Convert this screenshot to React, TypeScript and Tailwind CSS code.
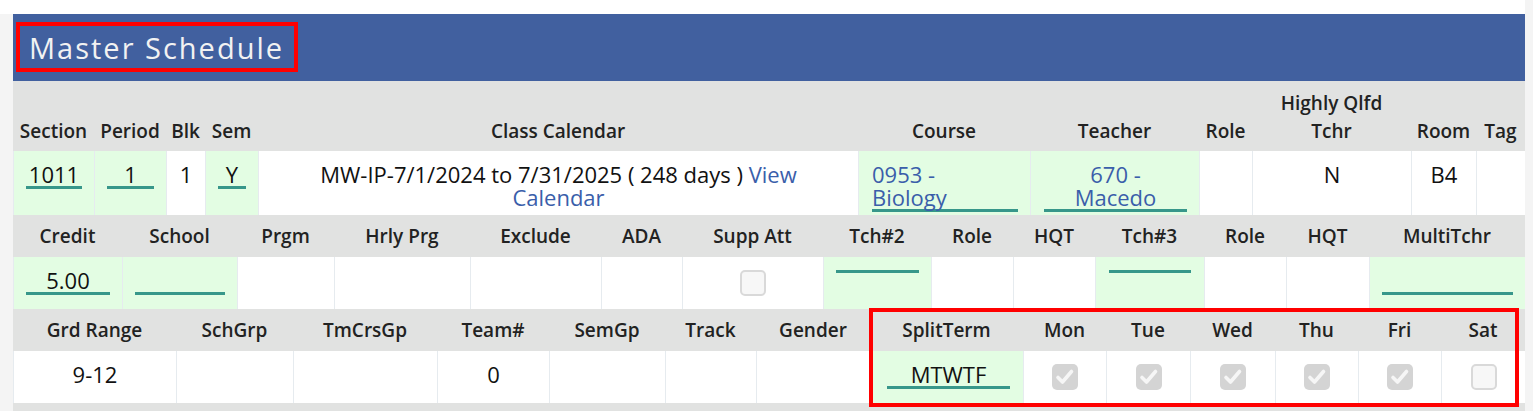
import React from "react";

const SEP = "border-l border-[#e6ebef] first:border-l-0";

function Field({ value, className = "" }: { value?: string; className?: string }) {
  return (
    <div className={"border-b-[3px] border-[#37978a] text-center leading-[23px] h-[26px] " + className}>
      {value}
    </div>
  );
}

function Box({ checked }: { checked?: boolean }) {
  if (checked) {
    return (
      <div className="w-[26px] h-[26px] rounded-[5px] bg-[#d4d4d4] flex items-center justify-center">
        <svg width="26" height="26" viewBox="0 0 26 26">
          <polyline points="6,13.5 10.5,18 19.5,7.5" fill="none" stroke="#f6f6f6" strokeWidth="3.6" strokeLinecap="round" strokeLinejoin="round" />
        </svg>
      </div>
    );
  }
  return <div className="w-[26px] h-[26px] rounded-[5px] bg-[#f7f7f7] border-2 border-[#d9d9d9]" />;
}

export default function App() {
  const head2 = ["Credit", "School", "Prgm", "Hrly Prg", "Exclude", "ADA", "Supp Att", "Tch#2", "Role", "HQT", "Tch#3", "Role", "HQT", "MultiTchr"];
  const head3 = ["Grd Range", "SchGrp", "TmCrsGp", "Team#", "SemGp", "Track", "Gender", "SplitTerm", "Mon", "Tue", "Wed", "Thu", "Fri", "Sat"];

  return (
    <div className="w-[1533px] h-[411px] overflow-hidden bg-white flex font-['Open_Sans',sans-serif]">
      <div className="w-[13px] mt-[14px] bg-[#f4f4f4]" />

      <div className="w-[1512px] pt-[14px] flex flex-col">
        {/* title bar */}
        <div className="relative h-[67px] bg-[#41609f] flex items-center px-[16px]">
          <h1 className="text-[29px] leading-none tracking-[2px] text-[#f2f2f2] font-normal">Master Schedule</h1>
          <div className="absolute left-[3px] top-[8px] w-[282px] h-[50px] border-4 border-[#ff0000]" />
        </div>

        {/* block 1 */}
        <div className="grid grid-cols-[81px_72px_39px_53px_600px_172px_169px_53px_159px_65px_49px] text-[#111]">
          {["Section", "Period", "Blk", "Sem", "Class Calendar", "Course", "Teacher", "Role", "Highly Qlfd\nTchr", "Room", "Tag"].map((h, i) => (
            <div key={i} className="h-[70px] bg-[#e1e2e1] flex items-end justify-center pb-[6px] text-[19px] leading-[28px] font-semibold text-[#222] text-center whitespace-pre-line">
              {h}
            </div>
          ))}

          <div className={SEP + " h-[64px] bg-[#e3fde3] px-[12px] pt-[12px] text-[22px]"}>
            <Field value="1011" />
          </div>
          <div className={SEP + " bg-[#e3fde3] px-[12px] pt-[12px] text-[22px]"}>
            <Field value="1" />
          </div>
          <div className={SEP + " bg-white pt-[12px] text-[22px] leading-[23px] text-center"}>1</div>
          <div className={SEP + " bg-[#e3fde3] px-[12px] pt-[12px] text-[22px]"}>
            <Field value="Y" />
          </div>
          <div className={SEP + " bg-white pt-[12px] text-[22px] leading-[23px] text-center"}>
            MW-IP-7/1/2024 to 7/31/2025 ( 248 days ) <span className="text-[#3a5eaa]">View</span>
            <br />
            <span className="text-[#3a5eaa]">Calendar</span>
          </div>
          <div className={SEP + " bg-[#e3fde3] pl-[13px] pr-[12px] pt-[12px] text-[22px]"}>
            <div className="border-b-[3px] border-[#37978a] leading-[23px] text-[#3a5eaa]">
              0953 -<br />Biology
            </div>
          </div>
          <div className={SEP + " bg-[#e3fde3] pl-[13px] pr-[12px] pt-[12px] text-[22px]"}>
            <div className="border-b-[3px] border-[#37978a] leading-[23px] text-[#3a5eaa] text-center">
              670 -<br />Macedo
            </div>
          </div>
          <div className={SEP + " bg-white"} />
          <div className={SEP + " bg-white pt-[12px] text-[22px] leading-[23px] text-center"}>N</div>
          <div className={SEP + " bg-white pt-[12px] text-[22px] leading-[23px] text-center"}>B4</div>
          <div className={SEP + " bg-white"} />
        </div>

        {/* block 2 */}
        <div className="grid grid-cols-[109px_115px_97px_136px_131px_81px_141px_108px_82px_82px_109px_82px_83px_156px] text-[#111]">
          {head2.map((h, i) => (
            <div key={i} className="h-[42px] bg-[#e1e2e1] flex items-center justify-center text-[19px] font-semibold text-[#222]">
              {h}
            </div>
          ))}
          <div className={SEP + " h-[52px] bg-[#e3fde3] px-[12px] pt-[12px] text-[22px]"}>
            <Field value="5.00" />
          </div>
          <div className={SEP + " bg-[#e3fde3] px-[12px] pt-[12px] text-[22px]"}>
            <Field />
          </div>
          <div className={SEP + " bg-white"} />
          <div className={SEP + " bg-white"} />
          <div className={SEP + " bg-white"} />
          <div className={SEP + " bg-white"} />
          <div className={SEP + " bg-white flex items-center justify-center"}>
            <Box />
          </div>
          <div className={SEP + " bg-[#e3fde3] px-[12px] pt-[13px]"}>
            <div className="h-[3px] bg-[#37978a]" />
          </div>
          <div className={SEP + " bg-white"} />
          <div className={SEP + " bg-white"} />
          <div className={SEP + " bg-[#e3fde3] px-[13px] pt-[13px]"}>
            <div className="h-[3px] bg-[#37978a]" />
          </div>
          <div className={SEP + " bg-white"} />
          <div className={SEP + " bg-white"} />
          <div className={SEP + " bg-[#e3fde3] px-[12px] pt-[12px] text-[22px]"}>
            <Field />
          </div>
        </div>

        {/* block 3 */}
        <div className="relative grid grid-cols-[163px_117px_144px_112px_116px_91px_114px_153px_83px_84px_85px_83px_83px_84px] text-[#111]">
          {head3.map((h, i) => (
            <div key={i} className="h-[42px] bg-[#e1e2e1] flex items-center justify-center text-[19px] font-semibold text-[#222]">
              {h}
            </div>
          ))}
          <div className={SEP + " h-[52px] bg-white pt-[12px] text-[22px] leading-[23px] text-center"}>9-12</div>
          <div className={SEP + " bg-white"} />
          <div className={SEP + " bg-white"} />
          <div className={SEP + " bg-white pt-[12px] text-[22px] leading-[23px] text-center"}>0</div>
          <div className={SEP + " bg-white"} />
          <div className={SEP + " bg-white"} />
          <div className={SEP + " bg-white"} />
          <div className={SEP + " bg-[#e3fde3] pl-[16px] pr-[13px] pt-[12px] text-[22px]"}>
            <Field value="MTWTF" />
          </div>
          {[true, true, true, true, true, false].map((c, i) => (
            <div key={i} className={SEP + " bg-white flex items-center justify-center"}>
              <Box checked={c} />
            </div>
          ))}
          <div className="absolute left-[856px] top-[-1px] w-[650px] h-[99px] border-4 border-[#ff0000]" />
        </div>

        <div className="flex-1 bg-[#e1e2e1]" />
      </div>

      <div className="w-[8px] bg-[#f4f4f4]" />
    </div>
  );
}
